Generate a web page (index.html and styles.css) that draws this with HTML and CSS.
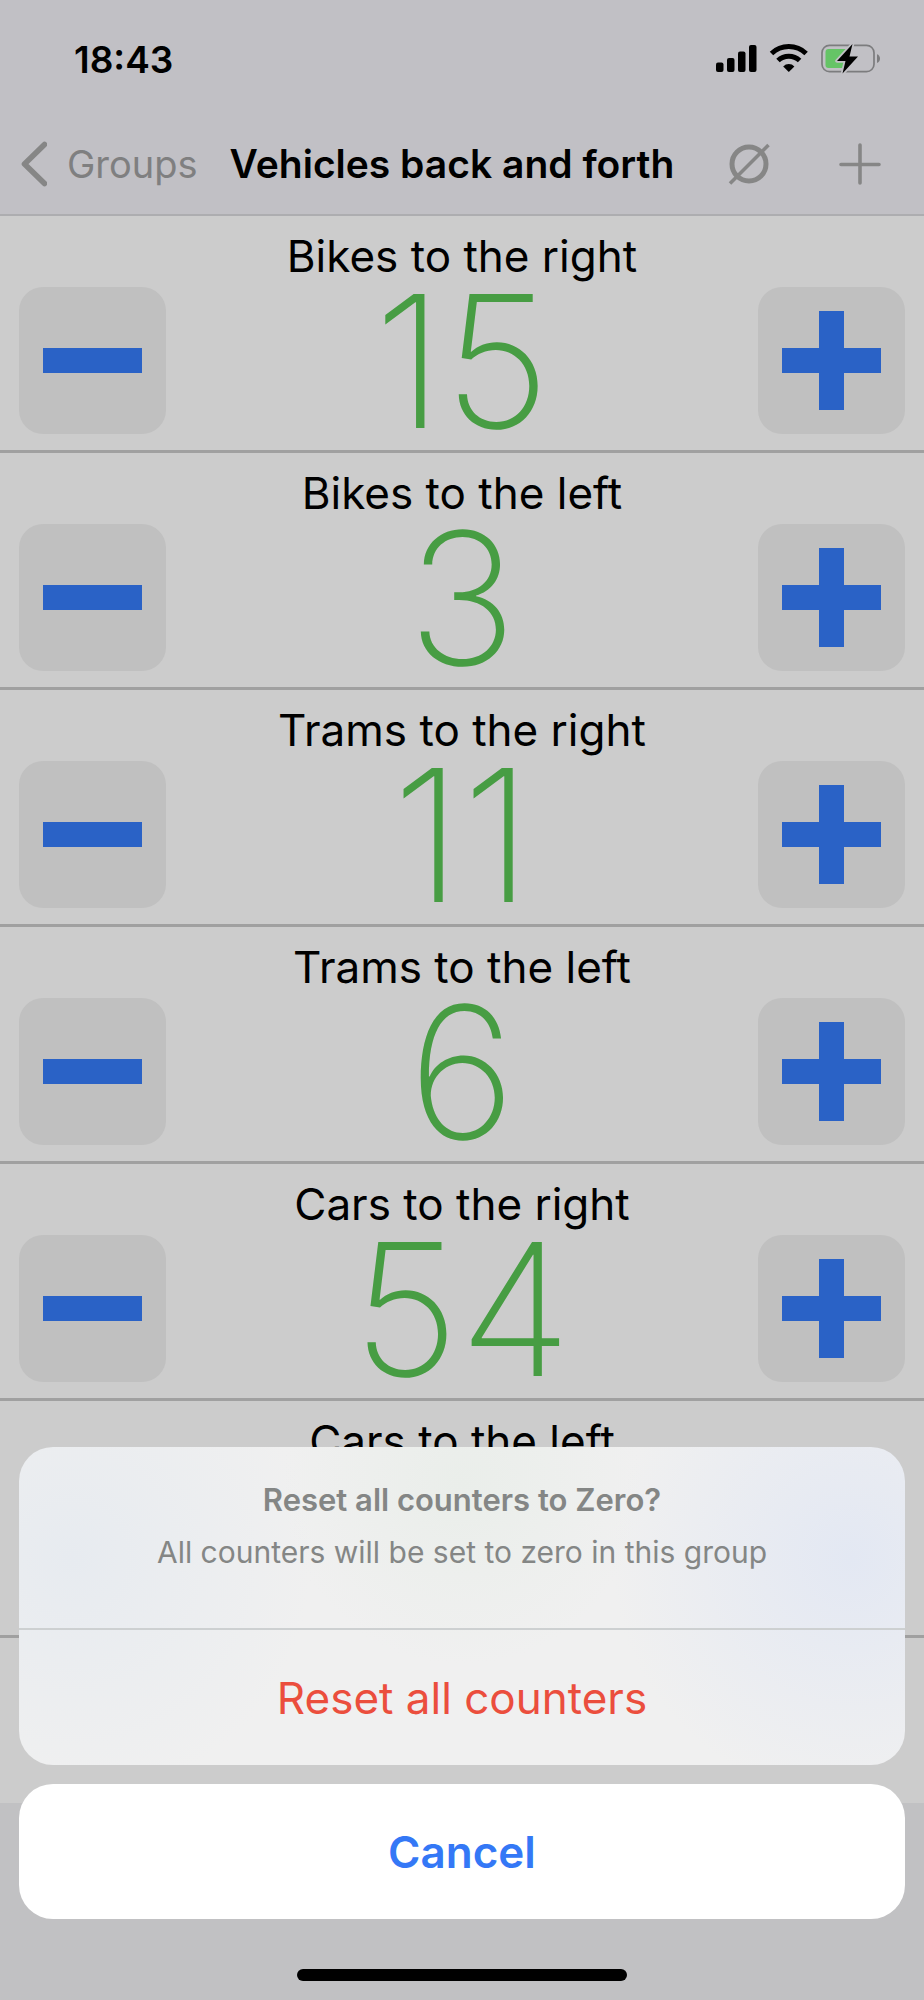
FILE: index.html
```html
<!DOCTYPE html>
<html lang="en">
<head>
<meta charset="utf-8">
<meta name="viewport" content="width=device-width, initial-scale=1">
<title>Vehicles back and forth</title>
<link rel="stylesheet" href="styles.css">
</head>
<body>
<div class="screen">
  <header class="top">
    <div class="status">
      <span class="time">18:43</span>
      <svg class="status-icons" width="165" height="30" viewBox="0 0 165 30" aria-hidden="true">
        <rect x="0" y="18.500" width="7.500" height="9.500" rx="2"/>
        <rect x="11" y="14" width="7.500" height="14" rx="2"/>
        <rect x="22" y="7.500" width="7.500" height="20.500" rx="2"/>
        <rect x="33" y="1" width="7.500" height="27" rx="2"/>
        <path d="M72.800 28l-5.600-5.600a8 8 0 0 1 11.200 0z"/>
        <path d="M55.500 9.500a25 25 0 0 1 34.600 0M62 16.500a15.600 15.600 0 0 1 21.600 0" fill="none" stroke="#000" stroke-width="5"/>
        <rect x="106" y="1.300" width="52" height="26.400" rx="7.500" fill="none" stroke="#7c7c7e" stroke-width="1.700"/>
        <path d="M161 10.300c4 1 4 7.600 0 8.600z" fill="#7c7c7e"/>
        <path d="M112.500 5H130v19h-17.500q-3 0-3-3V8q0-3 3-3z" fill="#65c466"/>
        <path d="M136.500 0L121 17h8.500l-3 12.500L142 12.500h-8.500z" stroke="#c1c0c5" stroke-width="3.500" stroke-linejoin="round" paint-order="stroke"/>
      </svg>
    </div>
    <nav class="navbar">
      <a class="back" href="#groups">
        <svg width="27" height="46" viewBox="0 0 27 46" aria-hidden="true"><path d="M24.500 3.500L4.500 23l20 19.500" fill="none" stroke="#868686" stroke-width="5.600" stroke-linecap="round" stroke-linejoin="round"/></svg>
        <span>Groups</span>
      </a>
      <h1 class="title">Vehicles back and forth</h1>
      <div class="actions">
        <button class="icon-button" type="button" aria-label="Reset counters">
          <svg width="42" height="42" viewBox="0 0 42 42" aria-hidden="true"><circle cx="21" cy="21" r="17" fill="none" stroke="#868686" stroke-width="5"/><path d="M2 40.500L40.500 2" stroke="#868686" stroke-width="3.500"/></svg>
        </button>
        <button class="icon-button" type="button" aria-label="Add counter">
          <svg width="42" height="42" viewBox="0 0 42 42" aria-hidden="true"><path d="M21 2v38M2 21.500h38" stroke="#868686" stroke-width="3.600" stroke-linecap="round"/></svg>
        </button>
      </div>
    </nav>
  </header>

  <main class="list">
    <section class="row">
      <button class="step minus" type="button" aria-label="Decrease"></button>
      <div class="counter"><h2 class="name">Bikes to the right</h2><output class="count">15</output></div>
      <button class="step plus" type="button" aria-label="Increase"></button>
    </section>
    <section class="row">
      <button class="step minus" type="button" aria-label="Decrease"></button>
      <div class="counter"><h2 class="name">Bikes to the left</h2><output class="count">3</output></div>
      <button class="step plus" type="button" aria-label="Increase"></button>
    </section>
    <section class="row">
      <button class="step minus" type="button" aria-label="Decrease"></button>
      <div class="counter"><h2 class="name">Trams to the right</h2><output class="count">11</output></div>
      <button class="step plus" type="button" aria-label="Increase"></button>
    </section>
    <section class="row">
      <button class="step minus" type="button" aria-label="Decrease"></button>
      <div class="counter"><h2 class="name">Trams to the left</h2><output class="count">6</output></div>
      <button class="step plus" type="button" aria-label="Increase"></button>
    </section>
    <section class="row">
      <button class="step minus" type="button" aria-label="Decrease"></button>
      <div class="counter"><h2 class="name">Cars to the right</h2><output class="count">54</output></div>
      <button class="step plus" type="button" aria-label="Increase"></button>
    </section>
    <section class="row">
      <div class="counter"><h2 class="name">Cars to the left</h2></div>
    </section>
  </main>

  <div class="overlay" role="dialog" aria-labelledby="sheet-title" aria-describedby="sheet-text">
    <div class="sheet">
      <div class="message">
        <h2 class="sheet-title" id="sheet-title">Reset all counters to Zero?</h2>
        <p class="sheet-text" id="sheet-text">All counters will be set to zero in this group</p>
      </div>
      <button class="action reset" type="button">Reset all counters</button>
    </div>
    <button class="action cancel" type="button">Cancel</button>
    <div class="home-bar"></div>
  </div>
</div>
</body>
</html>
```
FILE: styles.css
```css
* {
  box-sizing: border-box;
}

body {
  margin: 0;
  background: #c1c1c3;
  color: #000;
  font-family: Inter, "Liberation Sans", sans-serif;
}

h1, h2, p {
  margin: 0;
  font-weight: 400;
}

button {
  margin: 0;
  padding: 0;
  border: 0;
  background: none;
  font: inherit;
  cursor: pointer;
}

svg {
  display: block;
}

.screen {
  position: relative;
  display: flex;
  flex-direction: column;
  min-height: 100vh;
}

.top {
  background: #c1c0c5;
  border-bottom: 2px solid #adadb0;
}

.status {
  display: flex;
  align-items: center;
  justify-content: space-between;
  height: 118px;
  padding: 0 43px 0 74px;
}

.time {
  font-size: 37px;
  font-weight: 600;
}

.navbar {
  display: flex;
  align-items: center;
  height: 96px;
  padding: 0 43px 5px 20px;
}

.back {
  display: flex;
  align-items: center;
  gap: 20px;
  color: #7f7f80;
  font-size: 38px;
  text-decoration: none;
}

.title {
  flex: 1;
  padding-left: 32px;
  font-size: 39px;
  font-weight: 600;
  white-space: nowrap;
}

.actions {
  display: flex;
  gap: 69px;
}

.list {
  padding-bottom: 165px;
  background: #ccc;
}

.row {
  display: flex;
  align-items: flex-start;
  justify-content: space-between;
  height: 237px;
  padding: 0 19px;
  border-bottom: 3px solid #a0a0a0;
}

.counter {
  display: flex;
  flex: 1;
  flex-direction: column;
  align-items: center;
  padding-top: 12px;
}

.name {
  font-size: 44px;
  line-height: 56px;
}

.count {
  color: #479d43;
  font-size: 184px;
  font-weight: 200;
  line-height: 154px;
}

.step {
  display: grid;
  place-content: center;
  place-items: center;
  width: 147px;
  height: 147px;
  margin-top: 71px;
  border-radius: 24px;
  background: #c0c0c0;
}

.step::before,
.step::after {
  grid-area: 1 / 1;
  background: #2a62c6;
}

.step::before {
  width: 99px;
  height: 25px;
  content: "";
}

.plus::after {
  width: 25px;
  height: 99px;
  content: "";
}

.overlay {
  position: absolute;
  right: 0;
  bottom: 0;
  left: 0;
  display: flex;
  flex-direction: column;
  gap: 19px;
  padding: 0 19px 19px;
}

.sheet {
  overflow: hidden;
  border-radius: 34px;
  background:
    radial-gradient(circle at 94% 35%, #e3e8f3, #e3e8f300 240px),
    radial-gradient(circle at 6% 35%, #e7ebf0, #e7ebf000 240px),
    radial-gradient(circle at 50% 12%, #eaeeea, #eaeeea00 180px),
    #f0f0f0;
}

.message {
  height: 183px;
  padding-top: 35px;
  border-bottom: 2px solid #cdd0d1;
  color: #848685;
  font-size: 30px;
  line-height: 36px;
  text-align: center;
}

.sheet-title {
  font-size: 31px;
  font-weight: 600;
}

.sheet-text {
  margin-top: 16px;
}

.action {
  display: block;
  width: 100%;
  height: 135px;
  font-size: 44px;
}

.reset {
  color: #eb4e3d;
}

.cancel {
  border-radius: 34px;
  background: #fff;
  color: #3478f6;
  font-weight: 600;
}

.home-bar {
  align-self: center;
  width: 330px;
  height: 12px;
  margin-top: 31px;
  border-radius: 6px;
  background: #000;
}
```
